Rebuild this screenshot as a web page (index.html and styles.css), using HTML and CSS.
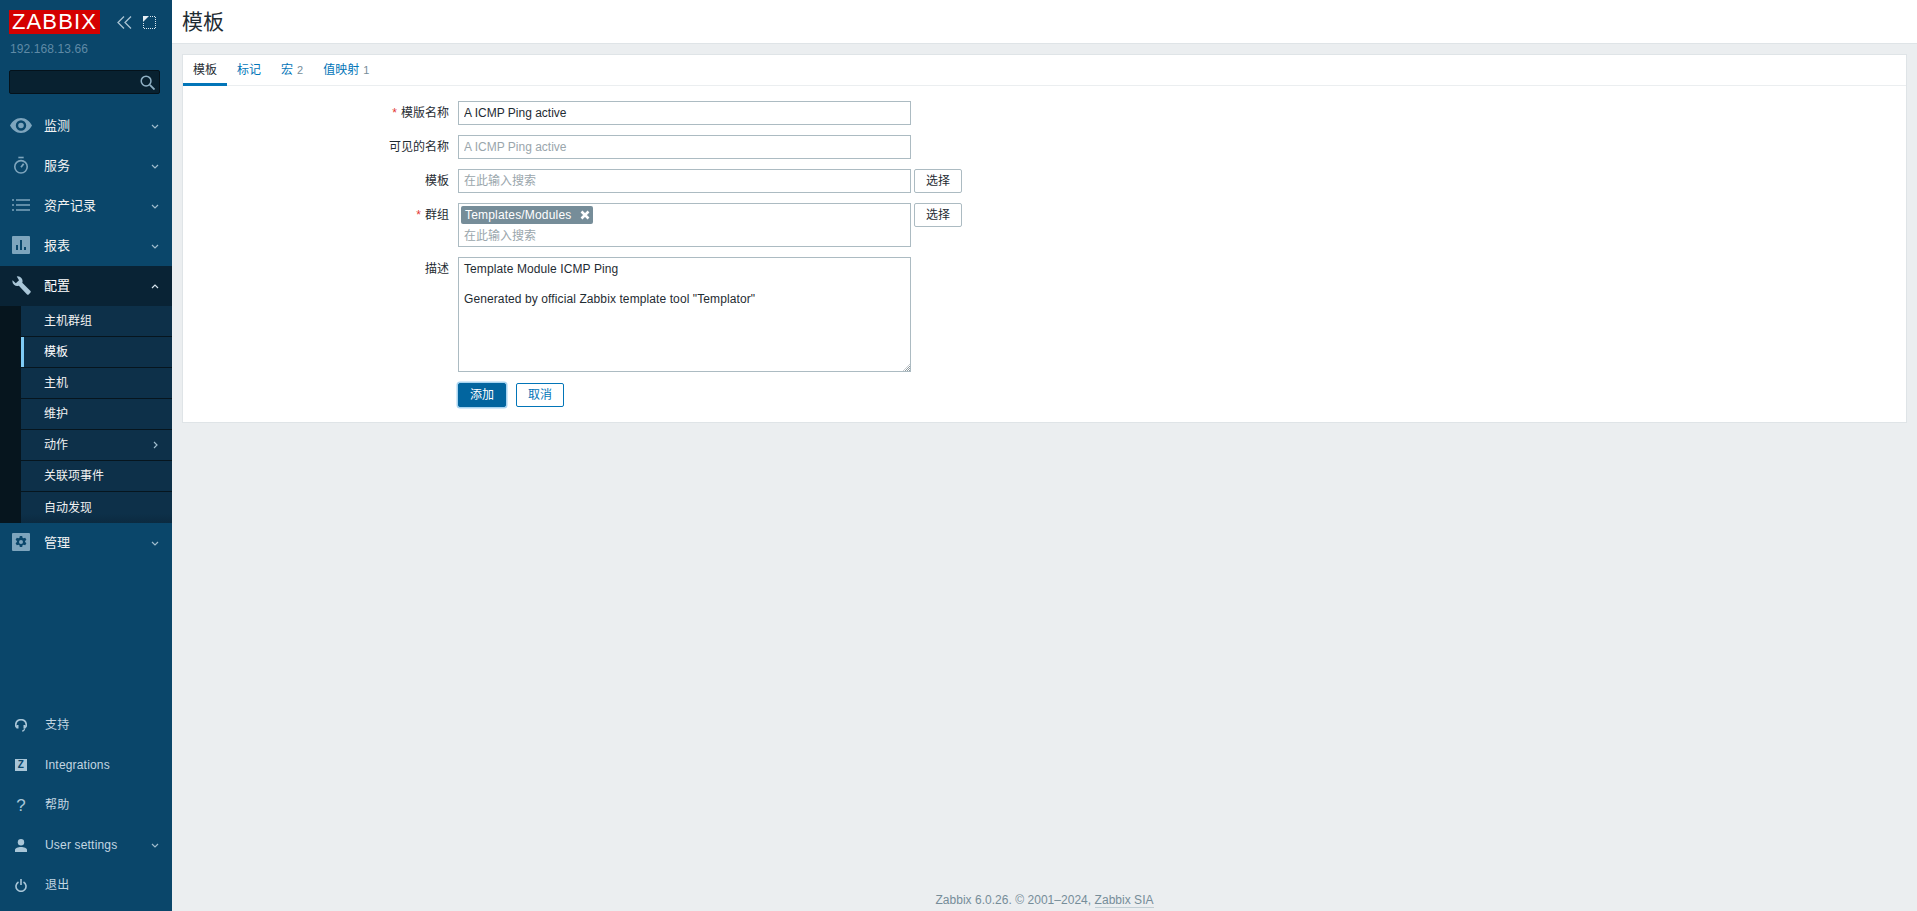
FILE: index.html
```html
<!DOCTYPE html>
<html lang="zh">
<head>
<meta charset="utf-8">
<title>模板</title>
<link rel="stylesheet" href="styles.css">
</head>
<body>
<aside class="sidebar">
  <div class="brand">
    <span class="logo">ZABBIX</span>
    <span class="brand-tools">
      <svg class="tool wide" viewBox="0 0 15 13"><path d="M7 .5 1 6.500l6 6M14 .5 8 6.500l6 6" fill="none" stroke="#a9c3d3" stroke-width="1.300"/></svg>
      <svg class="tool" viewBox="0 0 13 13"><path d="M.5 7v5.500h12V.5H7" fill="none" stroke="#dbe7ee" stroke-dasharray="1 1"/><path d="M0 0h6L0 6z" fill="#e6eff4"/></svg>
    </span>
  </div>
  <div class="host">192.168.13.66</div>
  <div class="search">
    <svg class="search-icon" viewBox="0 0 16 16"><circle cx="6.500" cy="6.500" r="5.200" fill="none" stroke="#8fb0c4" stroke-width="1.600"/><path d="m10.500 10.500 5 5" stroke="#8fb0c4" stroke-width="2"/></svg>
  </div>
  <nav class="menu">
    <a class="item"><span class="ico"><svg viewBox="0 0 22 15" width="22" height="15"><path d="M11 0C6 0 2.300 3.200 0 7.500 2.300 11.800 6 15 11 15s8.700-3.200 11-7.500C19.700 3.200 16 0 11 0zm0 12.700a5.200 5.200 0 1 1 0-10.400 5.200 5.200 0 0 1 0 10.400zm0-8a2.800 2.800 0 1 0 0 5.600 2.800 2.800 0 0 0 0-5.600z" fill="#7ea5bd" fill-rule="evenodd"/></svg></span><span class="lbl">监测</span><svg class="chev" viewBox="0 0 8 5"><path d="m1 1 3 3 3-3" fill="none" stroke="#9fbccd" stroke-width="1.200"/></svg></a>
    <a class="item"><span class="ico"><svg viewBox="0 0 18 20" width="16" height="19"><path d="M6 1h6" stroke="#7ea5bd" stroke-width="1.800"/><circle cx="9" cy="11.500" r="7" fill="none" stroke="#7ea5bd" stroke-width="1.800"/><path d="m9 12 3-4" stroke="#7ea5bd" stroke-width="2"/></svg></span><span class="lbl">服务</span><svg class="chev" viewBox="0 0 8 5"><path d="m1 1 3 3 3-3" fill="none" stroke="#9fbccd" stroke-width="1.200"/></svg></a>
    <a class="item"><span class="ico"><svg viewBox="0 0 18 12" width="18" height="12"><path d="M0 1h2M4 1h14M0 6h2M4 6h14M0 11h2M4 11h14" stroke="#7ea5bd" stroke-width="1.600"/></svg></span><span class="lbl">资产记录</span><svg class="chev" viewBox="0 0 8 5"><path d="m1 1 3 3 3-3" fill="none" stroke="#9fbccd" stroke-width="1.200"/></svg></a>
    <a class="item"><span class="ico"><svg viewBox="0 0 18 18" width="18" height="18"><path d="M1 0h16a1 1 0 0 1 1 1v16a1 1 0 0 1-1 1H1a1 1 0 0 1-1-1V1a1 1 0 0 1 1-1zm3 9v5h2V9zm4-5v10h2V4zm4 7v3h2v-3z" fill="#7ea5bd" fill-rule="evenodd"/></svg></span><span class="lbl">报表</span><svg class="chev" viewBox="0 0 8 5"><path d="m1 1 3 3 3-3" fill="none" stroke="#9fbccd" stroke-width="1.200"/></svg></a>
    <a class="item open"><span class="ico"><svg viewBox="0 0 20 20" width="19" height="19"><path d="M5 .5a5 5 0 0 1 5.800 6.600l8.400 8.400a1.500 1.500 0 0 1 0 2.200l-1.400 1.400a1.500 1.500 0 0 1-2.200 0L7.200 10.200A5 5 0 0 1 .6 4.400L4 7.600 7.400 4.500z" fill="#a9c6d8"/></svg></span><span class="lbl">配置</span><svg class="chev" viewBox="0 0 8 5"><path d="m1 4 3-3 3 3" fill="none" stroke="#d5e3ec" stroke-width="1.200"/></svg></a>
    <div class="submenu">
      <a class="sub">主机群组</a>
      <a class="sub active">模板</a>
      <a class="sub">主机</a>
      <a class="sub">维护</a>
      <a class="sub">动作<svg class="chev-r" viewBox="0 0 5 8"><path d="m1 1 3 3-3 3" fill="none" stroke="#9fbccd" stroke-width="1.200"/></svg></a>
      <a class="sub">关联项事件</a>
      <a class="sub">自动发现</a>
    </div>
    <a class="item"><span class="ico"><svg viewBox="0 0 18 18" width="18" height="18"><path d="M1 0h16a1 1 0 0 1 1 1v16a1 1 0 0 1-1 1H1a1 1 0 0 1-1-1V1a1 1 0 0 1 1-1zm6.800 3-.3 1.700-1.100.6L4.800 4.700 3.600 6.800l1.300 1.100v1.200l-1.300 1.100 1.200 2.100 1.600-.6 1.100.6.300 1.700h2.400l.3-1.700 1.100-.6 1.600.6 1.200-2.100-1.300-1.100V7.900l1.300-1.100-1.200-2.100-1.600.6-1.100-.6L10.200 3zM9 7a2 2 0 1 1 0 4 2 2 0 0 1 0-4z" fill="#7ea5bd" fill-rule="evenodd"/></svg></span><span class="lbl">管理</span><svg class="chev" viewBox="0 0 8 5"><path d="m1 1 3 3 3-3" fill="none" stroke="#9fbccd" stroke-width="1.200"/></svg></a>
  </nav>
  <nav class="user-menu">
    <a class="uitem"><span class="uico"><svg viewBox="0 0 12 13" width="12" height="13"><path d="M2 8.500C.5 7.500.5 6.500.8 5a5.300 5.300 0 0 1 10.400 0c.3 1.500.3 2.500-1.200 3.500" fill="none" stroke="#a9c6d8" stroke-width="1.700"/><path d="M1.500 6h2v3.500h-2zM8.500 6h2v3.500h-2z" fill="#a9c6d8"/><path d="M9.500 9.500c0 1.800-1 2.500-2.500 2.500" fill="none" stroke="#a9c6d8" stroke-width="1.200"/></svg></span>支持</a>
    <a class="uitem"><span class="uico"><span class="zbox">Z</span></span>Integrations</a>
    <a class="uitem"><span class="uico qm">?</span>帮助</a>
    <a class="uitem"><span class="uico"><svg viewBox="0 0 12 13" width="12" height="13"><circle cx="6" cy="3.200" r="3.200" fill="#a9c6d8"/><path d="M0 13v-2C0 9 3 8 6 8s6 1 6 3v2z" fill="#a9c6d8"/></svg></span>User settings<svg class="chev" viewBox="0 0 8 5"><path d="m1 1 3 3 3-3" fill="none" stroke="#9fbccd" stroke-width="1.200"/></svg></a>
    <a class="uitem"><span class="uico"><svg viewBox="0 0 12 13" width="12" height="13"><path d="M3.500 3a5 5 0 1 0 5 0" fill="none" stroke="#a9c6d8" stroke-width="1.600"/><path d="M6 0v6" stroke="#a9c6d8" stroke-width="1.600"/></svg></span>退出</a>
  </nav>
</aside>
<div class="main">
  <header class="page-header"><h1>模板</h1></header>
  <div class="content">
    <section class="card">
      <ul class="tabs">
        <li class="tab current">模板</li>
        <li class="tab">标记</li>
        <li class="tab">宏<sup class="count">2</sup></li>
        <li class="tab">值映射<sup class="count">1</sup></li>
      </ul>
      <form class="form">
        <label class="flabel"><span class="req">*</span>模版名称</label>
        <div class="fval"><input class="field" type="text" value="A ICMP Ping active"></div>
        <label class="flabel">可见的名称</label>
        <div class="fval"><input class="field" type="text" placeholder="A ICMP Ping active"></div>
        <label class="flabel">模板</label>
        <div class="fval"><input class="field" type="text" placeholder="在此输入搜索"><button class="pick" type="button">选择</button></div>
        <label class="flabel"><span class="req">*</span>群组</label>
        <div class="fval">
          <div class="multi">
            <span class="tag">Templates/Modules<svg class="tag-x" viewBox="0 0 10 10"><path d="m1.500 1.500 7 7m0-7-7 7" stroke="#fff" stroke-width="2.600"/></svg></span>
            <span class="multi-ph">在此输入搜索</span>
          </div>
          <button class="pick" type="button">选择</button>
        </div>
        <label class="flabel">描述</label>
        <div class="fval">
          <div class="area-wrap">
            <textarea class="area" spellcheck="false">Template Module ICMP Ping

Generated by official Zabbix template tool "Templator"</textarea>
            <svg class="grip" viewBox="0 0 7 7"><defs><pattern id="hatch" width="2" height="2" patternUnits="userSpaceOnUse"><rect width="1" height="1" fill="#8f9a9f"/><rect x="1" y="1" width="1" height="1" fill="#8f9a9f"/></pattern></defs><path d="M7 0v7H0z" fill="url(#hatch)"/></svg>
          </div>
        </div>
        <div class="actions">
          <button class="btn primary" type="button">添加</button>
          <button class="btn alt" type="button">取消</button>
        </div>
      </form>
    </section>
  </div>
  <footer class="footer">Zabbix 6.0.26. © 2001–2024, <a class="flink">Zabbix SIA</a></footer>
</div>
</body>
</html>
```
FILE: styles.css
```css
* { box-sizing: border-box; }
html, body { height: 100%; }
body {
  margin: 0;
  display: flex;
  height: 100vh;
  overflow: hidden;
  background: #ebeef0;
  color: #1f2c33;
  font: 12px/14px Arial, "Liberation Sans", "Noto Sans CJK SC", sans-serif;
}
.sidebar {
  width: 172px;
  flex: none;
  display: flex;
  flex-direction: column;
  background: #0a466a;
  color: #f2f2f2;
}
.brand {
  display: flex;
  align-items: center;
  padding: 10px 0 0 9px;
  height: 34px;
}
.logo {
  width: 91px;
  height: 24px;
  background: #d40000;
  color: #fff;
  font: 22px/24px "Liberation Sans", Arial, sans-serif;
  letter-spacing: 1.100px;
  text-align: center;
  white-space: nowrap;
  overflow: hidden;
}
.brand-tools { display: flex; align-items: center; gap: 11px; margin-left: 17px; }
.tool { width: 13px; height: 13px; display: block; }
.tool.wide { width: 15px; }
.host {
  margin: 8px 0 0 10px;
  color: #5f8aa6;
  font-size: 12px;
  line-height: 14px;
  letter-spacing: .1px;
}
.search {
  position: relative;
  margin: 14px 0 0 9px;
  width: 151px;
  height: 24px;
  background: #082130;
  border: 1px solid #04121b;
  border-radius: 2px;
}
.search-icon { position: absolute; right: 4px; top: 4px; width: 15px; height: 15px; }
.menu { margin-top: 12px; }
.item {
  display: flex;
  align-items: center;
  height: 40px;
  font-size: 13px;
}
.item.open { background: #092335; color: #fff; }
.ico { width: 44px; padding: 0 10px 2px 8px; display: flex; justify-content: center; flex: none; }
.lbl { flex: 1; }
.chev { width: 8px; height: 5px; margin-right: 13px; flex: none; }
.submenu { background: #06151e; padding-left: 21px; }
.sub {
  position: relative;
  display: flex;
  align-items: center;
  justify-content: space-between;
  height: 31px;
  padding: 0 14px 0 23px;
  background: #0d3049;
  border-bottom: 1px solid #06151e;
  font-size: 12px;
}
.sub:last-child { border-bottom: 0; background: linear-gradient(#0d3049 70%, #0b2a40); }
.sub.active { color: #fff; }
.sub.active::before {
  content: "";
  position: absolute;
  left: 0; top: 0; bottom: 0;
  width: 3px;
  background: #7fcbf5;
}
.chev-r { width: 5px; height: 8px; }
.user-menu { margin-top: auto; margin-bottom: 6px; }
.uitem {
  display: flex;
  align-items: center;
  height: 40px;
  color: #c3d6e2;
  font-size: 12px;
  letter-spacing: .18px;
}
.uitem .chev { margin-left: auto; }
.uico { width: 45px; padding-right: 3px; display: flex; justify-content: center; flex: none; color: #a9c6d8; }
.zbox {
  width: 12px; height: 12px;
  background: #a9c6d8;
  color: #0a466a;
  font: bold 10px/12px Arial, "Liberation Sans", sans-serif;
  text-align: center;
}
.qm { font-size: 17px; line-height: 17px; }
.main { flex: 1; min-width: 0; display: flex; flex-direction: column; }
.page-header {
  height: 44px;
  flex: none;
  background: #fff;
  border-bottom: 1px solid #dfe4e7;
  padding-left: 10px;
}
.page-header h1 {
  margin: 0;
  font-size: 21px;
  line-height: 43px;
  font-weight: 400;
}
.content { padding: 10px 10px 0; }
.card { background: #fff; border: 1px solid #dfe4e7; }
.tabs {
  display: flex;
  list-style: none;
  margin: 0;
  padding: 0;
  height: 31px;
  border-bottom: 1px solid #ebeef0;
}
.tab {
  padding: 0 10px;
  height: 31px;
  line-height: 30px;
  color: #0275b8;
}
.tab.current { color: #1f2c33; border-bottom: 3px solid #0275b8; }
.count { font-size: 11px; color: #768d99; margin-left: 4px; vertical-align: baseline; }
.form {
  display: grid;
  grid-template-columns: 266px 1fr;
  column-gap: 9px;
  row-gap: 10px;
  padding: 15px 0 15px;
}
.flabel { text-align: right; line-height: 24px; color: #1f2c33; }
.req { color: #e33734; margin-right: 4px; }
.fval { display: flex; align-items: flex-start; gap: 3px; }
.field {
  width: 453px;
  height: 24px;
  padding: 0 5px;
  border: 1px solid #acbbc2;
  background: #fff;
  color: #1f2c33;
  font: inherit;
  outline: 0;
  border-radius: 0;
}
.field::placeholder, .multi-ph { color: #9aa6ac; opacity: 1; }
.pick {
  width: 48px;
  height: 24px;
  padding: 0;
  background: #fff;
  border: 1px solid #acbbc2;
  border-radius: 2px;
  color: #1f2c33;
  font: inherit;
}
.multi {
  width: 453px;
  height: 44px;
  padding: 2px;
  border: 1px solid #acbbc2;
  display: flex;
  flex-direction: column;
  align-items: flex-start;
}
.tag {
  display: flex;
  align-items: center;
  height: 18px;
  padding: 0 3px 0 4px;
  border-radius: 2px;
  background: #768d99;
  color: #fff;
  letter-spacing: .18px;
}
.tag-x { width: 10px; height: 10px; margin-left: 9px; }
.multi-ph { margin: 5px 0 0 3px; }
.area-wrap { position: relative; width: 453px; height: 115px; }
.area {
  width: 453px;
  height: 115px;
  padding: 4px 5px;
  border: 1px solid #acbbc2;
  background: #fff;
  color: #1f2c33;
  font: inherit;
  line-height: 15px;
  letter-spacing: .1px;
  outline: 0;
  border-radius: 0;
  display: block;
  resize: none;
}
.grip { position: absolute; right: 1px; bottom: 1px; width: 7px; height: 7px; }
.actions { grid-column: 2; display: flex; gap: 10px; padding-top: 1px; }
.btn {
  width: 48px;
  height: 24px;
  padding: 0;
  border-radius: 2px;
  font: inherit;
}
.primary { background: #02659f; border: 1px solid #02659f; color: #fff; box-shadow: 0 0 0 1.500px #a8d4f0; }
.alt { background: #fff; border: 1px solid #0275b8; color: #0275b8; }
.footer {
  margin-top: auto;
  height: 25px;
  text-align: center;
  color: #768d99;
  line-height: 14px;
  padding-top: 7px;
  letter-spacing: .03px;
}
.flink { border-bottom: 1px solid #c2ced4; }
```
